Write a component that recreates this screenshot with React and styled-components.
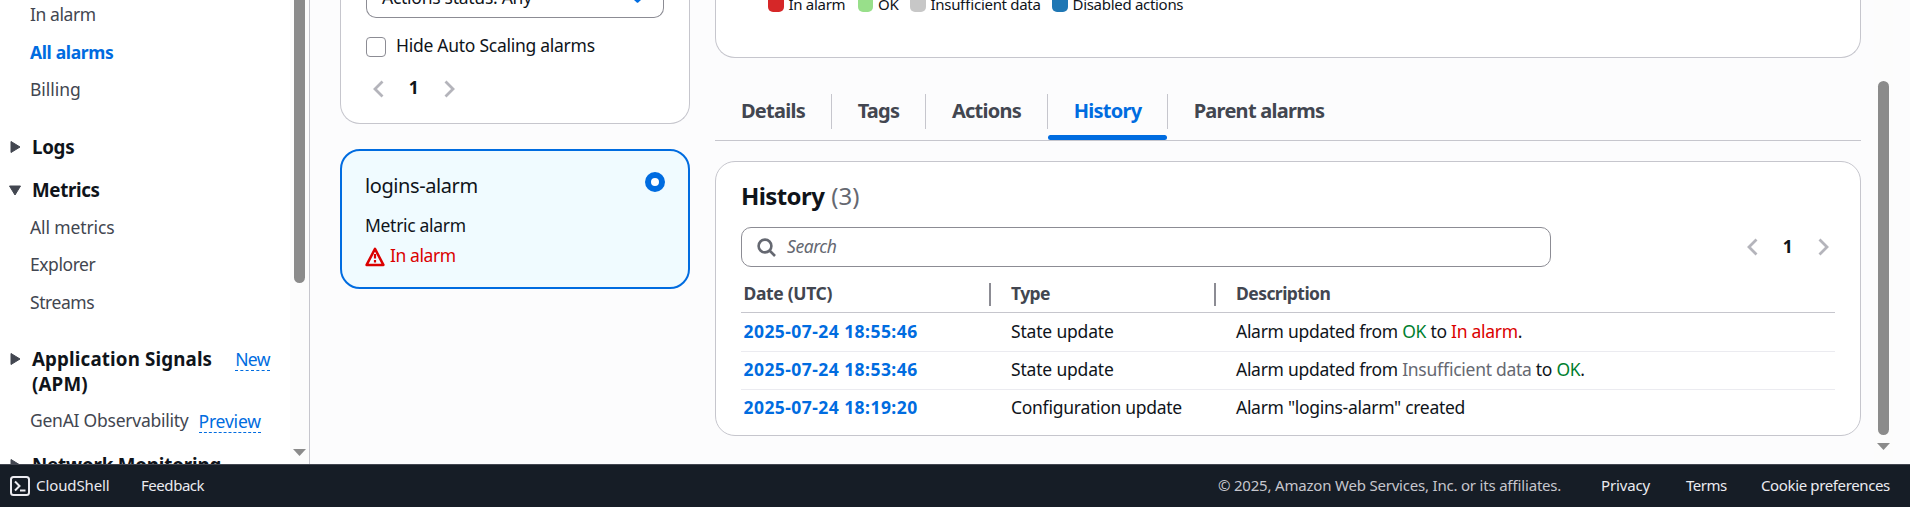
import React from 'react';
import styled, { createGlobalStyle, css } from 'styled-components';

const GlobalStyle = createGlobalStyle`
  * { box-sizing: border-box; }
  body {
    margin: 0;
    background: #fcfcfd;
    color: #0f141a;
    font-family: 'Noto Sans', 'Open Sans', sans-serif;
    font-size: 17.5px;
    letter-spacing: -0.27px;
    line-height: 25px;
    font-feature-settings: 'liga' 1;
    overflow: hidden;
  }
`;

const BLUE = '#006ce0';
const RED = '#db0000';
const GREEN = '#00802f';
const GREY = '#656871';

const Page = styled.div`
  display: flex;
  flex-direction: column;
  height: 507px;
  white-space: nowrap;
`;

const Body = styled.div`
  display: flex;
  height: 464px;
  overflow: hidden;
`;

/* Side navigation */
const Sidebar = styled.nav`
  display: flex;
  width: 310px;
  flex: none;
  background: #fff;
  border-right: 1px solid #c6c6cd;
`;

const NavList = styled.div`
  width: 290px;
  padding-top: 1.5px;
`;

const NavItem = styled.div`
  display: flex;
  height: 25px;
  margin-top: ${(p) => p.$gap ?? 12.5}px;
  padding-left: 30px;
  color: ${(p) => (p.$active ? BLUE : '#424650')};
  font-weight: ${(p) => (p.$active ? 700 : 400)};
  letter-spacing: ${(p) => p.$ls ?? -0.3}px;
`;

const NavSection = styled.div`
  display: flex;
  margin-top: ${(p) => p.$gap}px;
  padding-left: 8px;
  font-size: 18.75px;
  font-weight: 700;
  letter-spacing: ${(p) => p.$ls ?? -0.3}px;
`;

const Caret = styled.svg`
  width: 14px;
  height: 14px;
  margin: 6px 10px 0 0;
  flex: none;
  fill: #424650;
  stroke: #424650;
  stroke-width: 1;
  stroke-linejoin: round;
`;

const NavBadge = styled.span`
  height: 23px;
  margin: ${(p) => p.$top ?? 2}px 0 0 ${(p) => p.$left}px;
  line-height: 22px;
  font-size: 17.5px;
  font-weight: 400;
  color: ${BLUE};
  border-bottom: 1px dashed ${BLUE};
  letter-spacing: ${(p) => p.$ls ?? -0.2}px;
`;

const ScrollTrack = styled.div`
  display: flex;
  flex-direction: column;
  align-items: center;
  width: 19px;
  flex: none;
  height: 464px;
  margin-right: ${(p) => p.$inset ?? 0}px;
  background: #fcfcfc;
`;

const ScrollThumb = styled.div`
  width: 11px;
  height: ${(p) => p.$height}px;
  margin-top: ${(p) => p.$top}px;
  background: #8b8b8b;
  border-radius: ${(p) => (p.$top ? '6px' : '0 0 6px 6px')};
`;

const ScrollArrow = styled.svg`
  width: 13px;
  height: 7px;
  margin-top: ${(p) => p.$top}px;
  fill: #8b8b8b;
`;

/* Panels */
const card = css`
  background: #fff;
  border: 1px solid #c6c6cd;
  border-radius: 20px;
`;

const AlarmColumn = styled.section`
  width: 350px;
  flex: none;
  margin-left: 30px;
`;

const FilterCard = styled.div`
  ${card}
  height: 124px;
  border-top: 0;
  border-radius: 0 0 20px 20px;
  padding: 0 25px;
`;

const Select = styled.div`
  display: flex;
  justify-content: space-between;
  height: 18px;
  padding: 0 19px 0 15px;
  border: 1px solid #8c8c94;
  border-top: 0;
  border-radius: 0 0 10px 10px;
`;

const SelectText = styled.span`
  margin-top: -15.5px;
`;

const SelectCaret = styled.svg`
  width: 14px;
  height: 4px;
  fill: ${BLUE};
`;

const CheckRow = styled.label`
  display: flex;
  margin-top: 19px;
  height: 20px;
  align-items: flex-start;
  gap: 10px;
`;

const Checkbox = styled.span`
  width: 20px;
  height: 20px;
  border: 1px solid #8c8c94;
  border-radius: 4px;
`;

const CheckLabel = styled.span`
  margin-top: -4.5px;
`;

const Pager = styled.div`
  display: flex;
  align-items: center;
  height: 20px;
  margin-top: ${(p) => p.$top ?? 0}px;
  margin-left: ${(p) => p.$left ?? 0}px;
`;

const PageNumber = styled.span`
  width: 60px;
  padding-right: 1px;
  text-align: center;
  font-weight: 700;
  line-height: 20px;
  margin-top: ${(p) => p.$shift}px;
`;

const ChevronSvg = styled.svg`
  width: 11px;
  height: 18px;
  fill: none;
  stroke: #b4b4bb;
  stroke-width: 2.8;
`;

const AlarmCard = styled.div`
  display: flex;
  justify-content: space-between;
  height: 140px;
  margin-top: 25px;
  padding: 22px 23px 0;
  background: #f0fbff;
  border: 2px solid ${BLUE};
  border-radius: 20px;
`;

const AlarmName = styled.div`
  font-size: 20px;
  letter-spacing: -0.41px;
`;

const AlarmType = styled.div`
  margin-top: 14.5px;
  letter-spacing: -0.31px;
`;

const AlarmState = styled.div`
  display: flex;
  gap: 5px;
  margin-top: 5px;
  color: ${RED};
  letter-spacing: -0.42px;
`;

const WarningIcon = styled.svg`
  width: 20px;
  height: 20px;
  margin-top: 4px;
  fill: none;
  stroke: ${RED};
  stroke-width: 2.5;
  stroke-linejoin: round;
`;

const Radio = styled.span`
  width: 20px;
  height: 20px;
  margin-top: -1px;
  border: 6px solid ${BLUE};
  border-radius: 50%;
  background: #fff;
`;

/* Detail column */
const DetailColumn = styled.section`
  width: 1146px;
  flex: none;
  margin-left: 25px;
`;

const ChartCard = styled.div`
  ${card}
  height: 58px;
  border-top: 0;
  border-radius: 0 0 20px 20px;
  padding-left: 52px;
  display: flex;
`;

const LegendItem = styled.div`
  display: flex;
  width: ${(p) => p.$width}px;
  gap: 5px;
  font-size: 15px;
  letter-spacing: -0.3px;
`;

const LegendText = styled.span`
  margin-top: -8.5px;
`;

const Swatch = styled.span`
  width: 15.5px;
  height: 12px;
  border-radius: 0 0 5px 5px;
  background: ${(p) => p.$color};
`;

const Tabs = styled.div`
  display: flex;
  height: 47px;
  margin-top: 36px;
  border-bottom: 1px solid #c6c6cd;
`;

const Tab = styled.div`
  display: flex;
  flex-direction: column;
  justify-content: space-between;
  width: ${(p) => p.$width}px;
  height: 46px;
  color: ${(p) => (p.$active ? BLUE : '#424650')};
  font-size: 20px;
  font-weight: 700;
  letter-spacing: -0.73px;
  text-align: center;
`;

const TabLabel = styled.span`
  height: 35px;
  line-height: 33px;
  border-right: ${(p) => (p.$last ? 0 : 1)}px solid #c6c6cd;
`;

const TabBar = styled.span`
  height: 5px;
  margin-right: 1px;
  border-radius: 3px;
  background: ${BLUE};
`;

const HistoryCard = styled.div`
  ${card}
  height: 275px;
  margin-top: 20px;
  padding: 17px 25px 0;
`;

const Heading = styled.h2`
  display: flex;
  gap: 7px;
  margin: 0;
  height: 33px;
  line-height: 33px;
  font-size: 24px;
  font-weight: 700;
  letter-spacing: -0.6px;
`;

const Counter = styled.span`
  color: ${GREY};
  font-weight: 400;
  letter-spacing: 0;
`;

const ToolRow = styled.div`
  display: flex;
  align-items: center;
  margin-top: 15px;
`;

const SearchBox = styled.div`
  display: flex;
  align-items: center;
  gap: 11px;
  width: 810px;
  height: 40px;
  padding: 0 15px;
  border: 1px solid #8c8c94;
  border-radius: 10px;
  color: ${GREY};
  font-style: italic;
  letter-spacing: -0.45px;
`;

const Placeholder = styled.span`
  margin-top: -2px;
`;

const SearchIcon = styled.svg`
  width: 19px;
  height: 19px;
  fill: none;
  stroke: ${GREY};
  stroke-width: 2.6;
`;

const TableRow = styled.div`
  display: grid;
  grid-template-columns: 250px 225px 1fr;
  align-items: start;
  height: ${(p) => p.$height}px;
  padding-top: ${(p) => p.$pad}px;
  border-bottom: ${(p) => (p.$line ? `1px solid ${p.$line}` : 0)};
`;

const HeadCell = styled.div`
  height: 23px;
  padding-left: ${(p) => (p.$first ? 2.5 : 20)}px;
  line-height: 20px;
  font-weight: 700;
  color: #424650;
  letter-spacing: ${(p) => p.$ls}px;
  border-right: ${(p) => (p.$last ? 0 : 2)}px solid #8c8c94;
`;

const Cell = styled.div`
  padding-left: 20px;
  letter-spacing: ${(p) => p.$ls ?? -0.29}px;
`;

const DateCell = styled.a`
  padding-left: 2.5px;
  color: ${BLUE};
  font-weight: 700;
  letter-spacing: 0.44px;
`;

const State = styled.span`
  color: ${(p) => p.$color};
`;

/* Footer */
const Footer = styled.footer`
  display: flex;
  align-items: center;
  height: 43px;
  padding: 0 19px 0 10px;
  background: #161d26;
  border-top: 1px solid #424650;
  color: #ebebf0;
  font-size: 15px;
`;

const ShellIcon = styled.svg`
  width: 20px;
  height: 20px;
  margin-right: 6px;
  fill: none;
  stroke: #ebebf0;
  stroke-width: 2;
`;

const FooterText = styled.span`
  width: ${(p) => p.$width}px;
  letter-spacing: ${(p) => p.$ls}px;
  color: ${(p) => (p.$muted ? '#c6c6cd' : '#ebebf0')};
  margin-top: -2px;
`;

const Spacer = styled.span`
  flex: 1;
`;

const CaretRight = () => (
  <Caret viewBox="0 0 14 14"><path d="M3 1.5V12.5L12 7Z" /></Caret>
);
const CaretDown = () => (
  <Caret viewBox="0 0 14 14"><path d="M1.5 3H12.5L7 12Z" /></Caret>
);
const Chevron = ({ right }) => (
  <ChevronSvg viewBox="0 0 11 18">
    <path d={right ? 'M1.5 1.5L9 9L1.5 16.5' : 'M9.5 1.5L2 9L9.5 16.5'} />
  </ChevronSvg>
);
const Pagination = ({ shift = -4, ...rest }) => (
  <Pager {...rest}>
    <Chevron />
    <PageNumber $shift={shift}>1</PageNumber>
    <Chevron right />
  </Pager>
);
const DownArrow = ({ top }) => (
  <ScrollArrow viewBox="0 0 13 7" $top={top}><path d="M0 0H13L6.5 7Z" /></ScrollArrow>
);

export default function App() {
  return (
    <Page>
      <GlobalStyle />
      <Body>
        <Sidebar>
          <NavList>
            <NavItem $gap={0} $ls={-0.42}>In alarm</NavItem>
            <NavItem $active $gap={13} $ls={-0.36}>All alarms</NavItem>
            <NavItem $gap={12} $ls={-0.04}>Billing</NavItem>
            <NavSection $gap={32.5}><CaretRight />Logs</NavSection>
            <NavSection $gap={18} $ls={-0.35}><CaretDown />Metrics</NavSection>
            <NavItem $ls={-0.12}>All metrics</NavItem>
            <NavItem $ls={-0.44}>Explorer</NavItem>
            <NavItem $ls={-0.43}>Streams</NavItem>
            <NavSection $gap={31.5} $ls={0.14}>
              <CaretRight />
              <span>Application Signals<br />(APM)</span>
              <NavBadge $left={23} $ls={-0.6}>New</NavBadge>
            </NavSection>
            <NavItem $gap={11.5} $ls={-0.25}>
              GenAI Observability<NavBadge $left={10} $top={2.5}>Preview</NavBadge>
            </NavItem>
            <NavSection $gap={19.5} $ls={-0.18}><CaretRight />Network Monitoring</NavSection>
          </NavList>
          <ScrollTrack>
            <ScrollThumb $top={0} $height={283} />
            <DownArrow top={166} />
          </ScrollTrack>
        </Sidebar>

        <AlarmColumn>
          <FilterCard>
            <Select>
              <SelectText>Actions status: Any</SelectText>
              <SelectCaret viewBox="0 0 14 4"><path d="M4 0H11L8.5 2.3Q7.5 3.3 6.5 2.3Z" /></SelectCaret>
            </Select>
            <CheckRow>
              <Checkbox />
              <CheckLabel>Hide Auto Scaling alarms</CheckLabel>
            </CheckRow>
            <Pagination $top={22} $left={7} />
          </FilterCard>
          <AlarmCard>
            <div>
              <AlarmName>logins-alarm</AlarmName>
              <AlarmType>Metric alarm</AlarmType>
              <AlarmState>
                <WarningIcon viewBox="0 0 20 20">
                  <path d="M10 1.9L18.4 17.9H1.6Z" />
                  <path d="M10 7V11.5M10 13V15.4" strokeWidth="2.2" />
                </WarningIcon>
                In alarm
              </AlarmState>
            </div>
            <Radio />
          </AlarmCard>
        </AlarmColumn>

        <DetailColumn>
          <ChartCard>
            <LegendItem $width={89.5}><Swatch $color="#d62728" /><LegendText>In alarm</LegendText></LegendItem>
            <LegendItem $width={52.5}><Swatch $color="#98df8a" /><LegendText>OK</LegendText></LegendItem>
            <LegendItem $width={142}><Swatch $color="#c7c7c7" /><LegendText>Insufficient data</LegendText></LegendItem>
            <LegendItem $width={140}><Swatch $color="#1f77b4" /><LegendText>Disabled actions</LegendText></LegendItem>
          </ChartCard>
          <Tabs>
            <Tab $width={117}><TabLabel>Details</TabLabel></Tab>
            <Tab $width={94}><TabLabel>Tags</TabLabel></Tab>
            <Tab $width={122}><TabLabel>Actions</TabLabel></Tab>
            <Tab $width={120} $active><TabLabel>History</TabLabel><TabBar /></Tab>
            <Tab $width={182}><TabLabel $last>Parent alarms</TabLabel></Tab>
          </Tabs>
          <HistoryCard>
            <Heading>History <Counter>(3)</Counter></Heading>
            <ToolRow>
              <SearchBox>
                <SearchIcon viewBox="0 0 19 19">
                  <circle cx="8" cy="8" r="6.4" />
                  <path d="M12.5 12.5L18 18" />
                </SearchIcon>
                <Placeholder>Search</Placeholder>
              </SearchBox>
              <Pagination $left={196} shift={-2} />
            </ToolRow>
            <TableRow $height={46} $pad={16} $line="#c6c6cd">
              <HeadCell $first $ls={-0.34}>Date (UTC)</HeadCell>
              <HeadCell $ls={-0.6}>Type</HeadCell>
              <HeadCell $last $ls={-0.55}>Description</HeadCell>
            </TableRow>
            <TableRow $height={39} $pad={5.5} $line="#ebebf0">
              <DateCell>2025-07-24 18:55:46</DateCell>
              <Cell $ls={-0.18}>State update</Cell>
              <Cell>Alarm updated from <State $color={GREEN}>OK</State> to <State $color={RED}>In alarm</State>.</Cell>
            </TableRow>
            <TableRow $height={38} $pad={4.5} $line="#ebebf0">
              <DateCell>2025-07-24 18:53:46</DateCell>
              <Cell $ls={-0.18}>State update</Cell>
              <Cell>Alarm updated from <State $color={GREY}>Insufficient data</State> to <State $color={GREEN}>OK</State>.</Cell>
            </TableRow>
            <TableRow $height={38} $pad={4.5}>
              <DateCell>2025-07-24 18:19:20</DateCell>
              <Cell>Configuration update</Cell>
              <Cell>Alarm "logins-alarm" created</Cell>
            </TableRow>
          </HistoryCard>
        </DetailColumn>

        <Spacer />
        <ScrollTrack $inset={17}>
          <ScrollThumb $top={81} $height={354} />
          <DownArrow top={8} />
        </ScrollTrack>
      </Body>

      <Footer>
        <ShellIcon viewBox="0 0 20 20">
          <rect x="1" y="1" width="18" height="18" rx="2.5" />
          <path d="M5 5.5L9.5 10L5 14.5M10 14.5H15.5" />
        </ShellIcon>
        <FooterText $width={105} $ls={-0.1}>CloudShell</FooterText>
        <FooterText $width={70} $ls={-0.45}>Feedback</FooterText>
        <Spacer />
        <FooterText $muted $width={383} $ls={-0.2}>© 2025, Amazon Web Services, Inc. or its affiliates.</FooterText>
        <FooterText $width={85} $ls={-0.15}>Privacy</FooterText>
        <FooterText $width={75} $ls={-0.49}>Terms</FooterText>
        <FooterText $width={130} $ls={-0.37}>Cookie preferences</FooterText>
      </Footer>
    </Page>
  );
}
